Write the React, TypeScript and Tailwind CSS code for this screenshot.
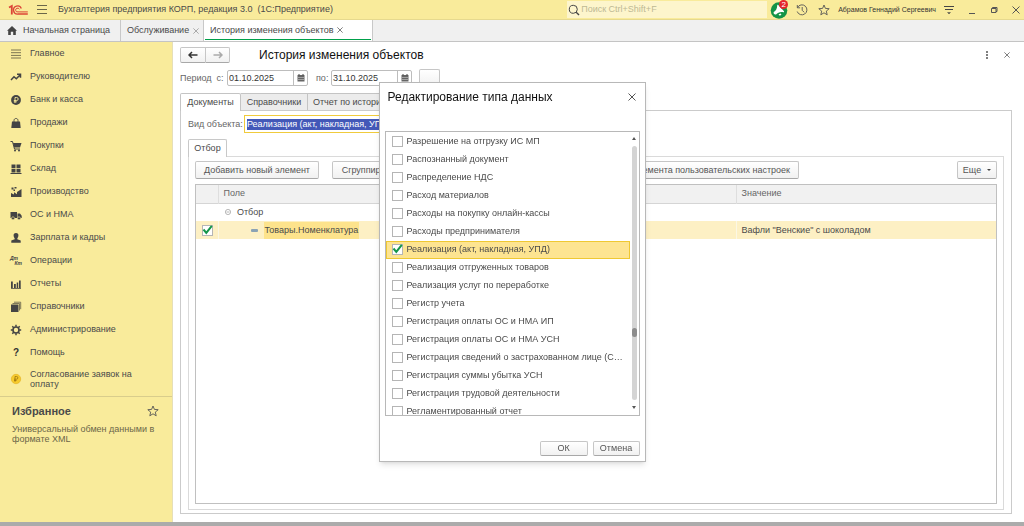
import React, { useState } from "react";

const sections = [
  { icon: "lines", title: "Главное" },
  { icon: "trend", title: "Руководителю" },
  { icon: "ruble", title: "Банк и касса" },
  { icon: "bag", title: "Продажи" },
  { icon: "cart", title: "Покупки" },
  { icon: "boxes", title: "Склад" },
  { icon: "factory", title: "Производство" },
  { icon: "truck", title: "ОС и НМА" },
  { icon: "person", title: "Зарплата и кадры" },
  { icon: "dtkt", title: "Операции" },
  { icon: "bars", title: "Отчеты" },
  { icon: "books", title: "Справочники" },
  { icon: "gear", title: "Администрирование" },
  { icon: "help", title: "Помощь" }
];

const dataTypes = [
  "Разрешение на отгрузку ИС МП",
  "Распознанный документ",
  "Распределение НДС",
  "Расход материалов",
  "Расходы на покупку онлайн-кассы",
  "Расходы предпринимателя",
  "Реализация (акт, накладная, УПД)",
  "Реализация отгруженных товаров",
  "Реализация услуг по переработке",
  "Регистр учета",
  "Регистрация оплаты ОС и НМА ИП",
  "Регистрация оплаты ОС и НМА УСН",
  "Регистрация сведений о застрахованном лице (С…",
  "Регистрация суммы убытка УСН",
  "Регистрация трудовой деятельности",
  "Регламентированный отчет"
];

const button =
  "flex items-center justify-center rounded-xs border border-[#c6c6c6] border-b-[#a8a8a8] bg-linear-to-b from-white to-[#f1f1f1] whitespace-nowrap text-[#555]";

export default function App() {
  return (
    <div className="flex h-screen flex-col overflow-hidden bg-white font-['Liberation_Sans',Arial,sans-serif] text-[9px] leading-[11px] text-[#4a4a4a]">
      <TitleBar />
      <WindowTabs />
      <div className="flex min-h-0 flex-1">
        <Sidebar />
        <HistoryForm />
      </div>
      <div className="h-1 shrink-0 bg-[#ababab]" />
      <TypeDialog />
    </div>
  );
}

function TitleBar() {
  return (
    <header className="flex h-5 shrink-0 items-center border-b border-[#e6d98e] bg-[#f9eb9b] pl-2">
      <svg viewBox="0 0 20 12" className="h-3 w-5 shrink-0" fill="none" stroke="#dc4436">
        <path d="M1 3.500 3.800 2V10.500" strokeWidth="1.800" />
        <path d="M13.300 4.600A4 4 0 1 0 10 10H19.800" strokeWidth="1.300" />
        <path d="M11.300 5.300A1.900 1.900 0 1 0 10 7.900H19.800" strokeWidth="1" />
      </svg>
      <button aria-label="Главное меню" className="ml-[9px]">
        <svg viewBox="0 0 10 9" className="h-[9px] w-2.5" stroke="#6b6649">
          <path d="M0 .5h10M0 4.500h10M0 8.500h10" />
        </svg>
      </button>
      <span className="ml-[11px] whitespace-pre">
        Бухгалтерия предприятия КОРП, редакция 3.0  (1С:Предприятие)
      </span>
      <label className="ml-auto flex h-[17px] w-[200px] items-center bg-[#fdf5cc] pl-px">
        <svg viewBox="0 0 12 12" className="size-3 shrink-0" fill="none" stroke="#444">
          <circle cx="5.3" cy="5.3" r="4" />
          <path d="m8.2 8.2 2.8 2.8" strokeWidth="1.4" />
        </svg>
        <input
          aria-label="Поиск"
          placeholder="Поиск Ctrl+Shift+F"
          className="min-w-0 flex-1 px-px outline-none placeholder:text-[#bdb994]"
        />
      </label>
      <button aria-label="Уведомления" className="relative ml-[3px] size-[18px]">
        <svg viewBox="0 0 18 18" className="size-[18px]">
          <circle cx="9" cy="9.5" r="8.3" fill="#129447" />
          <path d="M8.200 4 14 10.200c.3.700-.2 1.200-.9 1-3-.5-5.500.6-7 2.200-1.500.6-3-.7-2.400-2.300C5.800 9.800 7.300 7.500 7.200 4.500c0-.7.600-.9 1-.5z" fill="#fff" />
          <path d="M8.500 13.300l2.200-.9.700 1.300-1.600 1z" fill="#fff" />
        </svg>
        <span className="absolute -top-px left-[9px] flex size-[9px] items-center justify-center rounded-full bg-[#e5252b] text-[8px] text-white">
          2
        </span>
      </button>
      <button aria-label="История" className="ml-2">
        <svg viewBox="0 0 12 12" className="size-3" fill="none" stroke="#555" strokeWidth=".9">
          <path d="M1.500 3.500A5 5 0 1 1 1.200 7.500M1.300 1v2.800h2.800M6.200 3v3.300l2 2" />
        </svg>
      </button>
      <button aria-label="Избранное" className="ml-[10px]">
        <Star className="size-3" />
      </button>
      <a href="#user" className="ml-2 text-[7px] text-[#333]">
        Абрамов Геннадий Сергеевич
      </a>
      <button aria-label="Сервис" className="ml-2">
        <svg viewBox="0 0 10 10" className="size-2.5" stroke="#444">
          <path d="M0 1.500h10M1 4.500h8" />
          <path d="M3.500 7.500h3L5 9z" fill="#444" strokeWidth=".4" />
        </svg>
      </button>
      <button aria-label="Свернуть" className="ml-[14px]">
        <svg viewBox="0 0 8 8" className="size-2" stroke="#555">
          <path d="M1 7.500h6" />
        </svg>
      </button>
      <button aria-label="Развернуть" className="ml-[14px]">
        <svg viewBox="0 0 8 8" className="size-2" fill="none" stroke="#555">
          <path d="M1.500 2.500h4.500v4h-4.500zM2.500 2.500v-1h4.500v4h-1" />
        </svg>
      </button>
      <button aria-label="Закрыть" className="mr-1 ml-[14px]">
        <Cross className="size-2" />
      </button>
    </header>
  );
}

function WindowTabs() {
  return (
    <nav className="flex h-[22px] shrink-0 border-b border-[#c4c4c4] bg-[#f0f0f0]">
      <a href="#home" className="flex w-[121px] items-center border-r border-[#c8c8c8] pl-[7px]">
        <svg viewBox="0 0 10 9" className="mr-1.5 h-[9px] w-2.5" fill="#444">
          <path d="M5 0 0 4.800h1.200V9h2.600V5.700h2.400V9h2.600V4.800H10z" />
        </svg>
        Начальная страница
      </a>
      <div className="flex w-[83px] items-center border-r border-[#c8c8c8] pl-1.5">
        <a href="#service">Обслуживание</a>
        <button aria-label="Закрыть Обслуживание" className="ml-1">
          <Cross className="size-1.5 opacity-60" />
        </button>
      </div>
      <div className="flex w-[169px] flex-col border-r border-[#c8c8c8] bg-white px-px pb-px">
        <div className="flex flex-1 items-center pt-px pl-[5px]">
          <a href="#history">История изменения объектов</a>
          <button aria-label="Закрыть Историю" className="ml-1">
            <Cross className="size-1.5" />
          </button>
        </div>
        <div className="h-px bg-[#00a04a]" />
      </div>
    </nav>
  );
}

function Sidebar() {
  return (
    <aside className="w-[173px] shrink-0 border-r border-[#e6dfb8] bg-[#f9eb9b]">
      <nav>
        {sections.map((s) => (
          <a key={s.icon} href={`#${s.icon}`} className="flex h-[23px] items-center pl-2.5">
            <SectionIcon name={s.icon} />
            <span className="ml-2">{s.title}</span>
          </a>
        ))}
        <a href="#approval" className="flex h-[33px] items-center border-b border-[#d9cd8c] pb-[3px] pl-2.5 leading-[10px]">
          <svg viewBox="0 0 12 12" className="size-3 shrink-0">
            <circle cx="6" cy="6" r="4.700" fill="#f7cb2d" stroke="#e0ae1c" strokeWidth=".6" />
            <path d="M5 8.800V3.500h1.500a1.300 1.300 0 0 1 0 2.700H4M4 7.500h2.500" fill="none" stroke="#9a7410" strokeWidth=".8" />
          </svg>
          <span className="ml-2 w-[110px]">Согласование заявок на оплату</span>
        </a>
      </nav>
      <div className="flex items-center justify-between pt-2 pr-[13px] pl-3">
        <h2 className="text-[11px] leading-3 font-bold">Избранное</h2>
        <Star className="size-3" />
      </div>
      <a href="#xml" className="mt-[7px] block w-[156px] pl-3 leading-[10px] text-[#6b6649]">
        Универсальный обмен данными в формате XML
      </a>
    </aside>
  );
}

function HistoryForm() {
  return (
    <main className="flex min-w-0 flex-1 flex-col pt-[5px] pr-3 pb-2 pl-[7px]">
      <div className="flex h-4 items-center">
        <div className="flex h-4">
          <button aria-label="Назад" className={`${button} w-[26px] rounded-r-none`}>
            <Arrow className="h-2 w-2.5 text-[#333]" />
          </button>
          <button aria-label="Вперед" className={`${button} w-6 rounded-l-none border-l-0`}>
            <Arrow className="h-2 w-2.5 rotate-180 text-[#aaa]" />
          </button>
        </div>
        <h1 className="ml-[29px] text-[12px] leading-4 text-[#111]">История изменения объектов</h1>
        <button aria-label="Еще" className="ml-auto">
          <svg viewBox="0 0 4 8" className="h-2 w-1" fill="#555">
            <circle cx="2" cy="1" r="1" />
            <circle cx="2" cy="4" r="1" />
            <circle cx="2" cy="7" r="1" />
          </svg>
        </button>
        <button aria-label="Закрыть форму" className="mr-0.5 ml-[15px]">
          <Cross className="size-1.5" />
        </button>
      </div>

      <div className="mt-[7px] flex h-4 items-center">
        <label htmlFor="from" className="w-[47px] whitespace-pre text-[#666]">
          Период  с:
        </label>
        <DateField id="from" value="01.10.2025" />
        <label htmlFor="to" className="ml-2 w-[15px] text-[#666]">
          по:
        </label>
        <DateField id="to" value="31.10.2025" />
        <button aria-label="Выбрать период" className={`${button} ml-[7px] h-[18px] w-[21px]`} />
      </div>

      <div className="mt-[7px] flex h-[17px] shrink-0">
        <button className="relative -mb-px w-[61px] rounded-t-xs border border-b-0 border-[#c4c4c4] bg-white">
          Документы
        </button>
        <button className="w-[67px] border-t border-r border-[#c4c4c4] bg-[#ececec]">Справочники</button>
        <button className="w-[132px] border-t border-r border-[#c4c4c4] bg-[#ececec] whitespace-nowrap">
          Отчет по истории изменений
        </button>
      </div>

      <section className="flex min-h-0 flex-1 flex-col border border-[#cbcbcb] px-[7px] pt-1 pb-[3px]">
        <div className="flex h-[18px] items-center">
          <label htmlFor="kind" className="w-14 whitespace-nowrap text-[#666]">
            Вид объекта:
          </label>
          <div className="flex h-[18px] w-[260px] items-center border border-[#f0cb3c] pl-0.5">
            <input
              id="kind"
              readOnly
              value="Реализация (акт, накладная, УПД)"
              className="h-[11px] w-[150px] bg-[#4358b8] text-white outline-none"
            />
          </div>
        </div>

        <div className="mt-1.5 flex h-[17px] shrink-0">
          <button className="relative -mb-px w-[39px] rounded-t-xs border border-b-0 border-[#c8c8c8] bg-white">
            Отбор
          </button>
        </div>
        <div className="flex min-h-0 flex-1 flex-col border border-[#dadada] px-1.5 pt-1 pb-[5px]">
          <div className="flex h-[18px] shrink-0">
            <button className={`${button} w-[124px]`}>Добавить новый элемент</button>
            <button className={`${button} ml-[13px] w-[118px]`}>Сгруппировать условия</button>
            <button className={`${button} ml-auto w-[330px] justify-end pr-2`}>
              Изменить свойства элемента пользовательских настроек
            </button>
            <button className={`${button} ml-[158px] w-10`}>
              Еще
              <svg viewBox="0 0 4 2" className="ml-1.5 h-0.5 w-1" fill="#444">
                <path d="M0 0h4L2 2z" />
              </svg>
            </button>
          </div>
          <FilterTable />
        </div>
      </section>
    </main>
  );
}

function FilterTable() {
  return (
    <div className="mt-[5px] min-h-0 flex-1 border border-[#c0c0c0]">
      <table className="w-full table-fixed border-collapse text-left">
        <colgroup>
          <col className="w-[22px]" />
          <col />
          <col className="w-[260px]" />
        </colgroup>
        <thead>
          <tr className="h-[18px] border-b border-[#d5d5d5] bg-[#f1f1f1]">
            <th aria-label="Использование" className="border-r border-[#dedede]" />
            <th className="border-r border-[#dedede] pl-[5px] font-normal text-[#666]">Поле</th>
            <th className="pl-[5px] font-normal text-[#666]">Значение</th>
          </tr>
        </thead>
        <tbody>
          <tr className="h-[18px]">
            <td />
            <td className="pl-[7px]">
              <div className="flex items-center">
                <svg viewBox="0 0 6 6" className="mr-1.5 size-1.5" fill="none" stroke="#999" strokeWidth=".7">
                  <circle cx="3" cy="3" r="2.600" />
                  <path d="M1.500 3h3" />
                </svg>
                Отбор
              </div>
            </td>
            <td />
          </tr>
          <tr className="h-[18px] bg-[#fdf0c4]">
            <td className="border-r border-[#fbf7e4] pl-1.5">
              <Tick label="Использовать" defaultChecked />
            </td>
            <td className="border-r border-[#fbf7e4] pl-8">
              <div className="flex items-center">
                <span className="mr-1.5 h-[3px] w-[7px] rounded-[1px] bg-[#8ba3b5]" />
                <span className="bg-[#fde38c] px-px py-[3px]">Товары.Номенклатура</span>
              </div>
            </td>
            <td className="pl-[5px]">Вафли "Венские" с шоколадом</td>
          </tr>
        </tbody>
      </table>
    </div>
  );
}

function TypeDialog() {
  const [selected, setSelected] = useState(6);

  return (
    <div className="fixed inset-0 flex items-center justify-center pt-[17px]">
      <div
        role="dialog"
        aria-label="Редактирование типа данных"
        className="w-[267px] border border-[#b8b8b8] bg-white px-[5px] pb-[5px] shadow-md"
      >
        <div className="flex h-[29px] items-center justify-between pr-1 pl-[3px]">
          <h2 className="text-[12px] leading-4 text-[#111]">Редактирование типа данных</h2>
          <button aria-label="Закрыть окно">
            <Cross className="size-2" />
          </button>
        </div>
        <div className="mt-[19px] flex h-[285px] border border-[#b8b8b8]">
          <ul className="min-w-0 flex-1 overflow-hidden pt-px">
            {dataTypes.map((name, i) => (
              <li key={name} onClick={() => setSelected(i)}>
                <label
                  className={`flex h-[18px] items-center border pr-1 pl-[5px] ${
                    i === selected ? "border-[#efc832] bg-[#fde491]" : "border-transparent"
                  }`}
                >
                  <Tick defaultChecked={i === 6} />
                  <span className="ml-1 whitespace-nowrap">{name}</span>
                </label>
              </li>
            ))}
          </ul>
          <div className="flex w-[9px] flex-col items-center justify-between pt-[5px] pb-1.5">
            <svg viewBox="0 0 4 3" className="h-[3px] w-1" fill="#555">
              <path d="M0 3h4L2 0z" />
            </svg>
            <div className="mt-1.5 mb-1.5 flex w-[5px] flex-1 flex-col rounded-full bg-[#d4d4d4] pt-[182px]">
              <div className="h-[9px] rounded-full bg-[#8c8c8c]" />
            </div>
            <svg viewBox="0 0 4 3" className="h-[3px] w-1" fill="#555">
              <path d="M0 0h4L2 3z" />
            </svg>
          </div>
        </div>
        <div className="mt-[25px] flex justify-end gap-[5px]">
          <button className={`${button} h-[15px] w-12`}>ОК</button>
          <button className={`${button} h-[15px] w-[47px]`}>Отмена</button>
        </div>
      </div>
    </div>
  );
}

function DateField({ id, value }: { id: string; value: string }) {
  return (
    <div className="flex h-4 w-[81px] rounded-xs border border-[#bdbdbd]">
      <input id={id} defaultValue={value} className="min-w-0 flex-1 pl-px text-[#333] outline-none" />
      <button aria-label="Календарь" className="flex w-[14px] items-center justify-center border-l border-[#bdbdbd]">
        <svg viewBox="0 0 8 8" className="size-2">
          <path d="M.5 1h7v6.500h-7z" fill="#666" />
          <path d="M1.500 3.500h5M1.500 5.500h5" stroke="#fff" strokeWidth=".8" strokeDasharray="1 1" />
          <path d="M2 0v1.500M6 0v1.500" stroke="#444" />
        </svg>
      </button>
    </div>
  );
}

function Tick({ label, defaultChecked }: { label?: string; defaultChecked?: boolean }) {
  return (
    <span className="relative block size-[11px] shrink-0">
      <input
        type="checkbox"
        aria-label={label}
        defaultChecked={defaultChecked}
        className="peer block size-[11px] appearance-none border border-[#b5b5b5] bg-white"
      />
      <svg
        viewBox="0 0 11 11"
        className="pointer-events-none absolute inset-0 hidden size-[11px] overflow-visible peer-checked:block"
        fill="none"
        stroke="#15964a"
        strokeWidth="2"
      >
        <path d="M1.500 4.500 4.300 7.800 9.800.8" />
      </svg>
    </span>
  );
}

function Cross({ className }: { className: string }) {
  return (
    <svg viewBox="0 0 8 8" className={className} stroke="#555">
      <path d="m.5.5 7 7M7.500.5l-7 7" />
    </svg>
  );
}

function Arrow({ className }: { className: string }) {
  return (
    <svg viewBox="0 0 10 8" className={className} fill="none" stroke="currentColor" strokeWidth="1.500">
      <path d="M9.500 4H1M4 1 1 4l3 3" />
    </svg>
  );
}

function Star({ className }: { className: string }) {
  return (
    <svg viewBox="0 0 12 12" className={className} fill="none" stroke="#555" strokeWidth=".9">
      <path d="m6 1 1.400 3.400 3.800.3-2.900 2.400.9 3.700L6 8.800l-3.200 2 .9-3.700L.8 4.700l3.800-.3z" />
    </svg>
  );
}

function SectionIcon({ name }: { name: string }) {
  const shapes: Record<string, React.ReactNode> = {
    lines: <path d="M1 2h10M1 4.700h10M1 7.400h10M1 10h10" stroke="#6b6649" strokeWidth=".9" />,
    trend: <path d="m1 9 3-3.200 2.300 2L10 4M7 3.300h3.500v3.500" fill="none" stroke="#444" strokeWidth="1.500" />,
    ruble: (
      <>
        <circle cx="6" cy="6" r="4.900" />
        <path d="M5 9V3.500h1.700a1.400 1.400 0 0 1 0 3H3.800M3.800 7.800h3" fill="none" stroke="#f9eb9b" strokeWidth=".9" />
      </>
    ),
    bag: (
      <>
        <path d="M2 4.500h8l.7 6.500H1.300z" />
        <path d="M4 6V3.500C4 .8 8 .8 8 3.500V6" fill="none" stroke="#444" strokeWidth=".9" />
      </>
    ),
    cart: (
      <>
        <path d="M3 3h8.500L10 7.500H4.200z" />
        <path d="M.5 1.500h2L4.500 9H10" fill="none" stroke="#444" />
        <circle cx="5" cy="10.500" r="1" />
        <circle cx="9" cy="10.500" r="1" />
      </>
    ),
    boxes: <path d="M1.500 1.500h4v3.700h-4zM6.500 1.500h4v3.700h-4zM1.500 6h4v3.500h-4zM6.500 6h4v3.500h-4zM.5 10h11v1H.5z" />,
    factory: <path d="M1 11V7l3 1.500V6.300l3 2V6l4.500-3v8zM1.500 1.500h2v2h-2zM4.500 1h2v1.500h-2zM3.500 3.500h1.500V5H3.500z" />,
    truck: (
      <>
        <path d="M.5 3h6.500v6H.5zM7.500 4.500h2.500l1.700 2.200V9H7.500z" />
        <circle cx="3" cy="9.300" r="1.500" stroke="#f9eb9b" strokeWidth=".6" />
        <circle cx="9" cy="9.300" r="1.500" stroke="#f9eb9b" strokeWidth=".6" />
      </>
    ),
    person: <path d="M6 1a2.400 2.400 0 0 1 2.400 2.600C8.400 5 7.600 6 7.300 6.500v.8l3.400 1.200v2.300H1.300V8.500l3.400-1.200v-.8C4.400 6 3.600 5 3.600 3.600A2.400 2.400 0 0 1 6 1z" />,
    bars: <path d="M1 3.500h1.800V10H1zM4 6h1.800v4H4zM6.700 4.500h1.500V10H6.700zM9 2.500h1.700V10H9zM1 10.200h10v.8H1z" />,
    books: (
      <>
        <path d="M1 3.500h7.500V11H1z" />
        <path d="M2.500 2.500h7v7M4 1.200h6.700v7" fill="none" stroke="#716b50" strokeWidth=".9" />
      </>
    ),
    gear: (
      <>
        <circle cx="6" cy="6" r="3" fill="none" stroke="#444" strokeWidth="1.600" />
        <path d="M6 .8v2M6 9.200v2M.8 6h2M9.200 6h2M2.300 2.300l1.400 1.400M8.300 8.300l1.400 1.400M2.300 9.700l1.400-1.400M8.300 3.700l1.400-1.400" stroke="#444" strokeWidth="1.500" />
      </>
    )
  };

  if (name === "help") {
    return <span className="w-3 text-center text-[10px] font-bold text-[#333]">?</span>;
  }
  if (name === "dtkt") {
    return (
      <span className="flex w-3 flex-col text-[5px] leading-[5px] font-bold text-[#444] italic">
        <span>Дт</span>
        <span className="self-end">Кт</span>
      </span>
    );
  }
  return (
    <svg viewBox="0 0 12 12" className="size-3 shrink-0" fill="#444">
      {shapes[name]}
    </svg>
  );
}
